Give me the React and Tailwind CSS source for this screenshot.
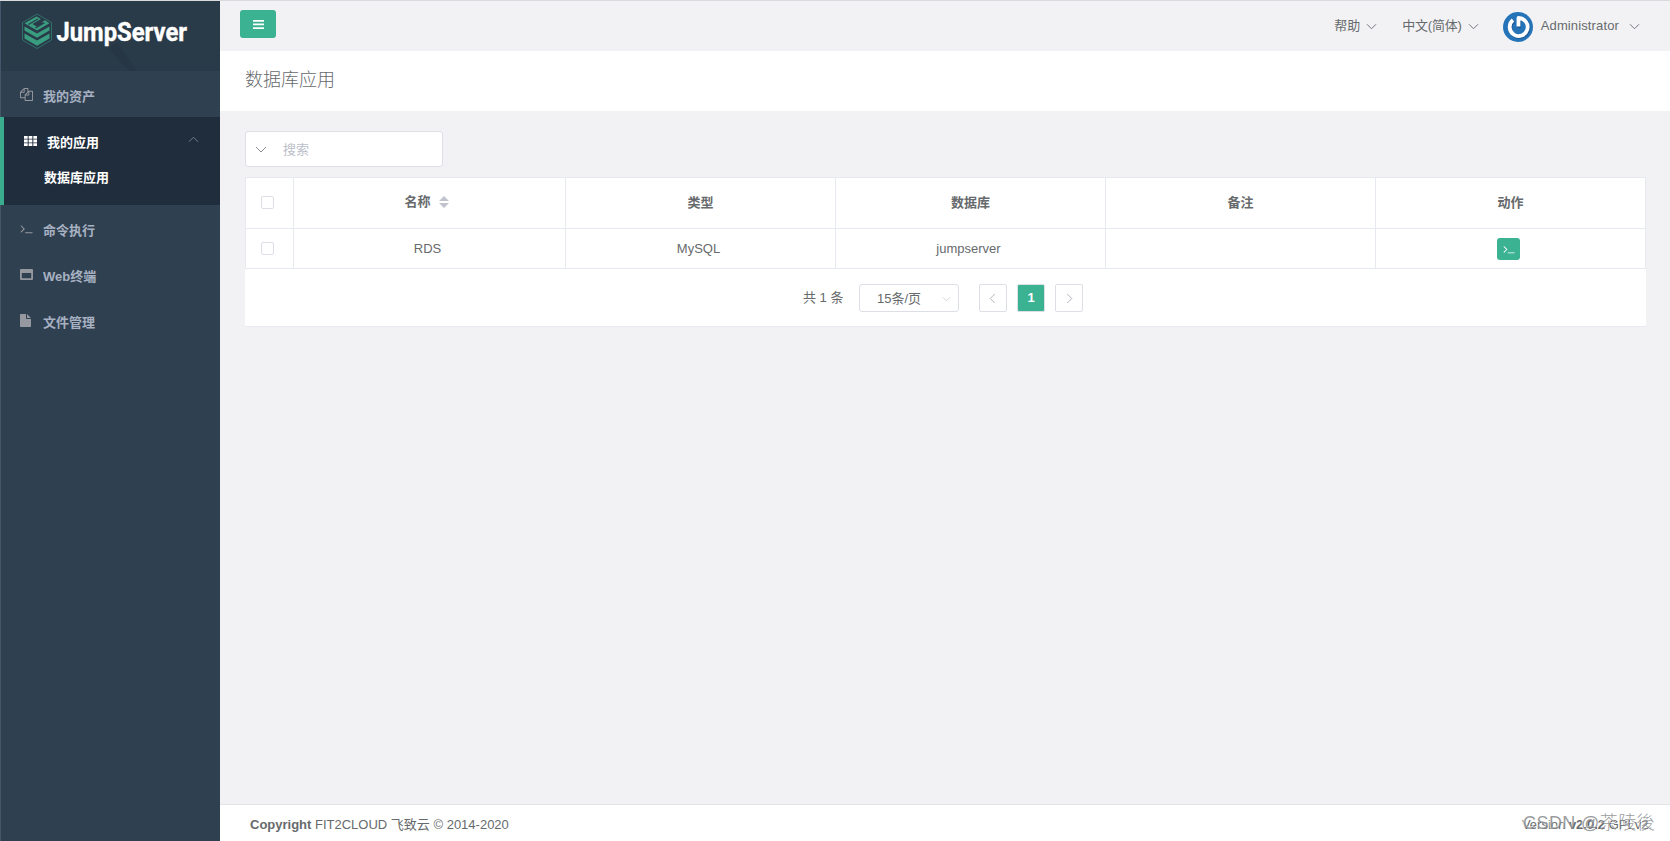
import { useState } from 'react';

const FONT = "font-['Liberation_Sans','Noto_Sans_CJK_SC',sans-serif]";

const COLUMNS = ['类型', '数据库', '备注', '动作'];
const ROWS = [{ name: 'RDS', type: 'MySQL', database: 'jumpserver', comment: '' }];

export default function App() {
  return (
    <div className={`flex h-screen w-full overflow-hidden border-t border-[#dadade] bg-[#f2f2f5] text-[13px] text-[#676a6c] ${FONT}`}>
      <Sidebar />
      <div className="flex min-w-0 flex-1 flex-col">
        <TopBar />
        <div className="flex h-[60px] shrink-0 items-center bg-white pl-[25px] pb-0.5">
          <h1 className="text-lg font-light">数据库应用</h1>
        </div>
        <main className="flex-1 pl-[25px] pr-6 pt-5">
          <SearchBox />
          <AppTable />
        </main>
        <Footer />
      </div>
    </div>
  );
}

function Sidebar() {
  return (
    <aside className="flex w-[220px] shrink-0 flex-col border-l border-[#45556a] bg-[#2f4050] font-bold text-[#a7b1c2]">
      <Logo />
      <MenuItem icon={<CopyIcon />} label="我的资产" />
      <div className="-ml-px h-[88px] border-l-4 border-[#3bad8f] bg-[#202d3c] text-white">
        <div className="flex h-[49px] items-center pl-5 pr-[22px] pt-0.5">
          <GridIcon />
          <span className="ml-[10px] flex-1">我的应用</span>
          <Chevron className="mb-1.5 h-[5px] w-[9px] rotate-180 text-[#7b8794]" />
        </div>
        <div className="pl-10 leading-6">数据库应用</div>
      </div>
      <MenuItem icon={<TerminalIcon className="size-[13px]" />} label="命令执行" />
      <MenuItem icon={<WindowIcon />} label="Web终端" />
      <MenuItem icon={<FileIcon />} label="文件管理" />
    </aside>
  );
}

function MenuItem({ icon, label }) {
  return (
    <div className="flex h-[46px] shrink-0 items-center pl-[19px] pt-[5px]">
      <span className="mb-1 flex w-[23px] text-[#96989f]">{icon}</span>
      <span>{label}</span>
    </div>
  );
}

function Logo() {
  return (
    <svg className="h-[70px] w-[219px] shrink-0 bg-[#293a49]" viewBox="1 1 219 70">
      <path d="M108 48L118 43L137 71H129Z" fill="#263645" />
      <path d="M37 14L51.500 22.500V40L37 48.500L22.500 40V22.500Z" fill="none" stroke="#327e70" strokeWidth="0.8" />
      <g fill="#3a9d80">
        <path d="M36.500 16.500L41 19L32.500 24L37 26.700L43.500 23L42 22L45 20.300L49.500 23.200L37 30.500L24.500 23.200Z" />
        <path d="M24.500 26.500L37 33.500L49.500 26.500V30.500L37 37.700L24.500 30.500Z" />
        <path d="M24.500 33.500L37 40.500L49.500 33.500V38.500L37 45.700L24.500 38.500Z" />
      </g>
      <path d="M28.500 24.500L38 19M35.500 28L44.500 22.800" fill="none" stroke="#293a49" strokeWidth="1.200" />
      <text x="56.500" y="40.500" fill="#fff" stroke="#fff" strokeWidth="0.400" fontFamily="Roboto, sans-serif" fontSize="26" fontWeight="700" textLength="130.500" lengthAdjust="spacingAndGlyphs">JumpServer</text>
    </svg>
  );
}

function TopBar() {
  return (
    <header className="flex h-[50px] shrink-0 items-center pl-5 pr-[31px]">
      <button className="mb-1 flex h-7 w-9 items-center justify-center rounded-[3px] bg-[#3bb393] text-white">
        <svg className="h-[9px] w-[11px]" viewBox="0 0 11 9" fill="currentColor">
          <path d="M0 0h11v1.700H0zM0 3.600h11v1.700H0zM0 7.200h11v1.700H0z" />
        </svg>
      </button>
      <div className="ml-auto flex items-center">
        <span>帮助</span>
        <Chevron className="ml-[7px] h-[5px] w-[9px]" />
        <span className="ml-[26px] tracking-[-0.2px]">中文(简体)</span>
        <Chevron className="ml-[7px] h-[5px] w-[9px]" />
        <Avatar />
        <span className="ml-2 tracking-[0.13px]">Administrator</span>
        <Chevron className="ml-[11px] h-[5px] w-[9px]" />
      </div>
    </header>
  );
}

function Avatar() {
  return (
    <svg className="ml-[25px] mt-px size-[30px]" viewBox="0 0 30 30">
      <circle cx="15" cy="15" r="15" fill="#2674b8" />
      <path d="M10.200 8A9 9 0 1 0 15.500 6V15" fill="none" stroke="#17558d" strokeWidth="3.800" strokeLinejoin="round" transform="translate(.5 .8)" />
      <path d="M10 8A9 9 0 1 0 15.500 6V14.500" fill="none" stroke="#fff" strokeWidth="3.800" strokeLinejoin="round" />
    </svg>
  );
}

function SearchBox() {
  return (
    <div className="flex h-9 w-[198px] items-center rounded-[3px] border border-[#dcdfe6] bg-white">
      <Chevron className="ml-[10px] mt-px h-[5px] w-[10px] text-[#8c8f94]" />
      <input className="ml-[17px] mt-px w-36 outline-none placeholder:text-[#bcc0c9]" placeholder="搜索" />
    </div>
  );
}

function AppTable() {
  const [checked, setChecked] = useState(false);

  return (
    <div className="mt-[10px] h-[150px] w-[1401px] rounded-[2px] border-b border-[#e7eaf3] bg-white">
      <table className="w-full table-fixed border-collapse border border-[#ebeef5] text-center">
        <colgroup>
          <col className="w-12" />
          <col className="w-[272px]" />
          <col className="w-[270px]" />
          <col className="w-[270px]" />
          <col className="w-[270px]" />
          <col className="w-[270px]" />
        </colgroup>
        <thead>
          <tr className="h-[51px]">
            <th className="border border-[#e7e9f0] p-0 pb-0.5 pr-1">
              <Checkbox checked={checked} onChange={() => setChecked(!checked)} />
            </th>
            <th className="border border-[#e7e9f0] p-0">
              <div className="flex items-center justify-center pb-0.5 pr-[6px]">
                名称
                <svg className="ml-2 h-3 w-[10px]" viewBox="0 0 10 12" fill="#c0c4cc">
                  <path d="M0 5L5 0L10 5zM0 7L5 12L10 7z" />
                </svg>
              </div>
            </th>
            {COLUMNS.map(title => (
              <th key={title} className="border border-[#e7e9f0] p-0">{title}</th>
            ))}
          </tr>
        </thead>
        <tbody>
          {ROWS.map(row => (
            <tr key={row.name} className="h-10">
              <td className="border border-[#e7e9f0] p-0 pr-1">
                <Checkbox checked={checked} onChange={() => setChecked(!checked)} />
              </td>
              <td className="border border-[#e7e9f0] p-0 pr-1">{row.name}</td>
              <td className="border border-[#e7e9f0] p-0 pr-1">{row.type}</td>
              <td className="border border-[#e7e9f0] p-0 pr-1">{row.database}</td>
              <td className="border border-[#e7e9f0] p-0">{row.comment}</td>
              <td className="border border-[#e7e9f0] p-0 pr-1">
                <button className="mx-auto flex h-[22px] w-[23px] items-center justify-center rounded-[3px] bg-[#3bb393] text-white">
                  <TerminalIcon className="size-3" />
                </button>
              </td>
            </tr>
          ))}
        </tbody>
      </table>
      <Pagination />
    </div>
  );
}

function Checkbox({ checked, onChange }) {
  return (
    <input
      type="checkbox"
      checked={checked}
      onChange={onChange}
      className="mx-auto block size-[13px] appearance-none rounded-[2px] border border-[#dcdfe6] bg-white checked:bg-[#3bb393]"
    />
  );
}

function Pagination() {
  return (
    <div className="flex items-center pl-[558px] pt-[15px]">
      <span className="w-[56px]">共 1 条</span>
      <div className="flex h-7 w-[100px] items-center rounded-[3px] border border-[#dcdfe6] pl-[17px] pt-px">
        <span className="w-[66px]">15条/页</span>
        <Chevron className="h-1 w-[7px] text-[#c0c4cc]" />
      </div>
      <button className="ml-5 flex size-7 items-center justify-center rounded-[2px] border border-[#dcdfe6] pr-0.5">
        <Chevron className="h-[5px] w-[9px] rotate-90 text-[#a9adb8]" />
      </button>
      <button className="ml-[10px] flex size-7 items-center justify-center rounded-[2px] border border-[#dcdfe6] bg-[#3bb393] font-bold text-white">1</button>
      <button className="ml-[10px] flex size-7 items-center justify-center rounded-[2px] border border-[#dcdfe6]">
        <Chevron className="h-[5px] w-[9px] -rotate-90 text-[#a9adb8]" />
      </button>
    </div>
  );
}

function Footer() {
  return (
    <footer className="relative flex h-[37px] shrink-0 items-center justify-between border-t border-[#e3e4e8] bg-white pl-[30px] pr-[18px] pt-1">
      <div>
        <strong>Copyright</strong> FIT2CLOUD 飞致云 © 2014-2020
      </div>
      <div>
        Version <strong>v2.0.2</strong> GPLv2.
      </div>
      {/* watermark sits on top of the version text */}
      <span className="absolute right-[15px] top-[4px] whitespace-nowrap text-lg font-light tracking-[0.4px] text-[#808285]/80 [text-shadow:-1px_-1px_0_#ffffff99]">CSDN @茶陵後</span>
    </footer>
  );
}

function Chevron({ className }) {
  return (
    <svg className={className} viewBox="0 0 10 5" fill="none" stroke="currentColor" strokeWidth="1" overflow="visible">
      <path d="M0 0L5 5L10 0" />
    </svg>
  );
}

function CopyIcon() {
  return (
    <svg className="size-[13px]" viewBox="0 0 1792 1792" fill="currentColor">
      <path d="M1696 384q40 0 68 28t28 68v1216q0 40-28 68t-68 28h-960q-40 0-68-28t-28-68v-288h-544q-40 0-68-28t-28-68v-672q0-40 20-88t48-76l408-408q28-28 76-48t88-20h416q40 0 68 28t28 68v328q68-40 128-40h416zm-544 213l-299 299h299v-299zm-640-384l-299 299h299v-299zm196 647l316-316v-416h-384v416q0 40-28 68t-68 28h-416v640h512v-256q0-40 20-88t48-76zm956 804v-1152h-384v416q0 40-28 68t-68 28h-416v640h896z" />
    </svg>
  );
}

function TerminalIcon({ className }) {
  return (
    <svg className={className} viewBox="0 0 1792 1792" fill="currentColor">
      <path d="M649 983l-466 466q-10 10-23 10t-23-10l-50-50q-10-10-10-23t10-23l393-393-393-393q-10-10-10-23t10-23l50-50q10-10 23-10t23 10l466 466q10 10 10 23t-10 23zm1079 457v64q0 14-9 23t-23 9h-960q-14 0-23-9t-9-23v-64q0-14 9-23t23-9h960q14 0 23 9t9 23z" />
    </svg>
  );
}

function GridIcon() {
  return (
    <svg className="mb-1 h-[10px] w-[13px]" viewBox="0 0 13 10" fill="currentColor">
      {[0, 3.6, 7.2].map(y => (
        <path key={y} d={`M0 ${y}h3.700v2.800H0zM4.650 ${y}h3.700v2.800h-3.700zM9.300 ${y}h3.700v2.800H9.300z`} />
      ))}
    </svg>
  );
}

function WindowIcon() {
  return (
    <svg className="h-[11px] w-[13px]" viewBox="0 0 13 11" fill="currentColor">
      <path fillRule="evenodd" d="M1 0h11q1 0 1 1v9q0 1-1 1H1q-1 0-1-1V1q0-1 1-1zM1.800 4v5.300h9.400V4z" />
    </svg>
  );
}

function FileIcon() {
  return (
    <svg className="h-[13px] w-[11px]" viewBox="0 0 11 13" fill="currentColor">
      <path d="M0 .7Q0 0 .7 0H6v4.200q0 .8.800.8H11v7.300q0 .7-.7.700H.7Q0 13 0 12.300zM7 0l4 4H7z" />
    </svg>
  );
}
